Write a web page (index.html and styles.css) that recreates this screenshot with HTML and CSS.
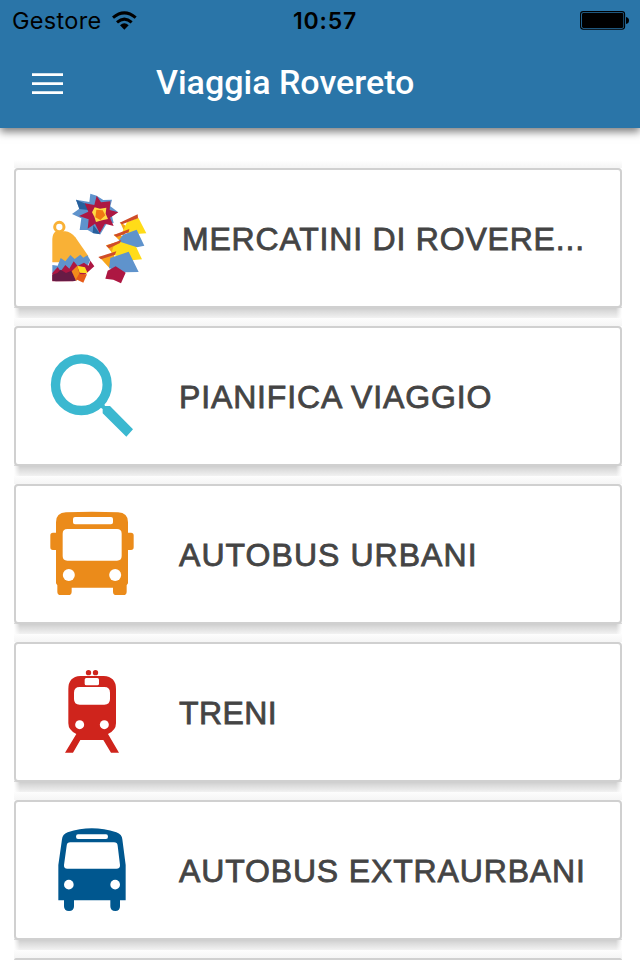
FILE: index.html
```html
<!DOCTYPE html>
<html lang="it">
<head>
<meta charset="utf-8">
<title>Viaggia Rovereto</title>
<link rel="stylesheet" href="styles.css">
</head>
<body>
<header class="header">
  <div class="status">
    <div class="carrier"><span class="carrier-name">Gestore</span>
      <svg class="wifi" viewBox="0 0 75 57"><g fill="none" stroke="#000" stroke-width="9"><path d="M3 20Q37-9 71 20"/><path d="M15 34Q37 15 59 34"/></g><path d="M24 43Q37 31 50 43L37 56Z"/></svg>
    </div>
    <time class="clock">10:57</time>
    <svg class="battery" viewBox="0 0 50 20"><rect x=".6" y=".6" width="44" height="17.6" rx="2.6" fill="none" stroke="#000" stroke-width="1.1"/><rect x="2" y="2" width="41.4" height="15" rx="1.4"/><path d="M46 6q3 .5 3 3.5T46 13Z"/></svg>
  </div>
  <div class="toolbar">
    <svg class="menu" viewBox="0 0 31 22"><path d="M0 1.7H31M0 10.7H31M0 19.7H31" stroke="#fff" stroke-width="2.700"/></svg>
    <h1 class="title">Viaggia Rovereto</h1>
  </div>
</header>
<main class="list">
  <div class="item"><a class="card">
    <svg class="icon icon-wide" viewBox="0 -3 360 330">
      <path fill="#5f93cc" d="M151 29L170 35L190 48L216 47L211 67L234 84L216 97L221 117L199 121L181 151L160 148L143 138L119 138L124 103L96 90L118 74L108 47L148 54Z"/>
      <path fill="#28609c" d="M108 47L137 59L145 78L118 75ZM160 123L181 151L158 147Z"/>
      <path fill="#ad1742" d="M170 35L183 55L211 52L209 78L235 85L210 101L221 126L195 119L179 148L165 119L143 134L146 106L117 96L145 83L134 58L163 63Z"/>
      <path fill="#ffdb42" d="M164 70L180 74L199 71L197 89L204 105L186 109L168 114L163 98L156 85Z"/>
      <path fill="#f17812" d="M169 77L188 79L196 94L181 108L166 100Z"/>
      <circle cx="58" cy="129" r="14" fill="none" stroke="#f9b136" stroke-width="9"/>
      <path fill="#f9b136" d="M48 142H76Q92 143 106 160L145 216L136 235H37V164Q38 148 48 142Z"/>
      <path fill="#5f93cc" d="M37 243L53 245L62 222L76 232L91 213L104 225L121 212L130 221L142 214L151 229L141 248L124 261L37 270Z"/>
      <path fill="#ad1742" d="M37 267L53 249L62 262L76 243L88 254L101 232L113 246L132 236L145 245L151 230L163 247L137 270L100 292H37Z"/>
      <path fill="#671b45" d="M48 292L37 290V272L52 267L62 257L78 267L94 260L108 291Z"/>
      <path fill="#ffdc20" d="M111 245L135 250L143 268L119 266Z"/><path fill="#f28b1b" d="M95 262L112 245L119 270L109 292Z"/><path fill="#e75b18" d="M117 270L141 271L130 296L108 286Z"/>
      <path fill="#f7a51b" d="M240 114L264 130L252 153H242L254 166L245 184H226L244 197L222 210L225 237L209 253L178 219L219 210L198 184L240 171L221 152L254 145Z"/>
      <path fill="#ffdc18" d="M261 115L295 101L319 148L279 151L247 145ZM220 188L242 171L286 184L306 226L275 229L213 211Z"/>
      <path fill="#5f93cc" d="M249 152L290 137L313 185L291 190L235 172ZM211 222L266 203L296 264L251 265L207 253Z"/>
      <path fill="#cf4c29" d="M239 116L293 91L294 103L246 121ZM221 153L268 135L266 145L230 159ZM198 185L244 168L240 177L207 193ZM175 219L229 202L225 212L183 226Z"/>
      <path fill="#ad1742" d="M203 260L227 247L257 266L243 298L220 287L196 284Z"/>
    </svg>
    <span class="label label-first">MERCATINI DI ROVERE...</span></a></div>
  <div class="item"><a class="card">
    <svg class="icon" viewBox="0 3 330 330"><circle cx="124" cy="134" r="77.5" fill="none" stroke="#3bb8d0" stroke-width="28"/><path fill="#3bb8d0" d="M181 193L191 188L195 198H210L279 268L259 290L188 220V207L180 202Z"/></svg>
    <span class="label">PIANIFICA VIAGGIO</span></a></div>
  <div class="item"><a class="card">
    <svg class="icon" viewBox="0 -3 330 330"><path fill="#eb8b1a" fill-rule="evenodd" d="M78 37Q156 34 234 37Q264 38 264 67V98H273Q281 98 281 106V142Q281 150 273 150H264V250L260 256V275Q260 285 250 285H229Q219 285 219 275V263H95V275Q95 285 85 285H62Q52 285 52 275V256L48 250V150H39Q31 150 31 142V106Q31 98 39 98H48V67Q48 38 78 37ZM105 51Q99 51 99 57V67Q99 73 105 73H213Q219 73 219 67V57Q219 51 213 51ZM82 87Q68 87 68 101V168Q68 182 82 182H231Q245 182 245 168V101Q245 87 231 87Z"/><circle cx="86.500" cy="225" r="18" fill="#fff"/><circle cx="225.500" cy="225" r="18" fill="#fff"/></svg>
    <span class="label label-urban">AUTOBUS URBANI</span></a></div>
  <div class="item"><a class="card">
    <svg class="icon" viewBox="0 -9 330 330"><g fill="#cf241c"><circle cx="145.500" cy="38" r="8"/><circle cx="166.500" cy="38" r="8"/><path fill-rule="evenodd" d="M121 48H191Q228 50 228 87V190Q228 211 204 222L237 278H213L190 240H121L99 278H75L109 222Q85 211 85 190V87Q85 50 121 48ZM139 54Q134 54 134 59V71Q134 76 139 76H172Q177 76 177 71V59Q177 54 172 54ZM119 81Q102 81 102 98V117Q102 134 119 134H193Q210 134 210 117V98Q210 81 193 81Z"/></g><circle cx="119" cy="194" r="13.500" fill="#fff"/><circle cx="193" cy="194" r="13.500" fill="#fff"/></svg>
    <span class="label label-train">TRENI</span></a></div>
  <div class="item"><a class="card">
    <svg class="icon" viewBox="0 0 330 330"><path fill="#00578f" fill-rule="evenodd" d="M66 73Q67 58 83 52Q155 27 229 52Q246 58 247 73L257 150V256H240V274Q240 288 226 288Q211 288 211 274V256H102V274Q102 288 87 288Q72 288 72 274V256H55V150ZM114 58Q108 58 108 65Q108 72 114 72H198Q204 72 204 65Q204 58 198 58ZM91 82Q81 82 80 92L72 150Q71 161 82 161H229Q241 161 240 150L233 92Q232 82 222 82Z"/><circle cx="86.500" cy="209" r="14.500" fill="#fff"/><circle cx="225.500" cy="209" r="14.500" fill="#fff"/></svg>
    <span class="label">AUTOBUS EXTRAURBANI</span></a></div>
  <div class="item item-cut"></div>
</main>
</body>
</html>
```
FILE: styles.css
```css
* { box-sizing: border-box; }
body { margin: 0; height: 960px; overflow: hidden; background: #fff; font-family: "Liberation Sans", Arial, sans-serif; }
.header { height: 128px; background: #2a75a8; box-shadow: 0 4px 8px rgba(0,0,0,.5); }
.status { height: 40px; padding: 2px 11px 0 12px; display: grid; grid-template-columns: 1fr auto 1fr; align-items: center; color: #000; font: 24px/38px Inter, sans-serif; }
.carrier { display: flex; align-items: center; gap: 11px; }
.carrier-name { letter-spacing: .3px; font-size: 23.500px; }
.wifi { width: 25px; height: 19px; margin-bottom: 2px; }
.clock { font-weight: 600; font-size: 23px; letter-spacing: .8px; padding-left: 9px; }
.battery { width: 50px; height: 20px; justify-self: end; margin-right: -1px; }
.toolbar { height: 88px; padding-left: 32px; display: flex; align-items: center; }
.menu { width: 31px; height: 22px; flex: none; }
.title { margin: 0 0 5px 93px; color: #fff; font: 500 34px/40px Roboto, sans-serif; }
.list { padding: 32px 18px 0 14px; }
.list::before { content: ""; display: block; height: 8px; background: linear-gradient(#fff, #f4f4f4); }
.item { height: 158px; background: linear-gradient(90deg, #fff, transparent 6px calc(100% - 6px), #fff) 0 140px / 100% 10px no-repeat, linear-gradient(#fff 138px, #cecece 140px, #dadada 143px, #f2f2f2 150px, #fdfdfd 150px, #f5f5f5 158px); }
.card { display: flex; align-items: center; height: 140px; padding-left: 24px; background: #fff; border: 2px solid #d0d0d0; border-radius: 4px; }
.item-cut { height: 2px; background: #d0d0d0; border-radius: 4px 4px 0 0; }
.icon { width: 110px; height: 110px; flex: none; }
.icon-wide { width: 120px; }
.label { margin: 2px 0 0 29px; color: #444; font-size: 32px; line-height: 40px; letter-spacing: .850px; white-space: nowrap; -webkit-text-stroke: .8px #444; }
.label-first { margin-left: 22px; letter-spacing: .8px; }
.label-urban { letter-spacing: 1.050px; }
.label-train { letter-spacing: .400px; }
```
